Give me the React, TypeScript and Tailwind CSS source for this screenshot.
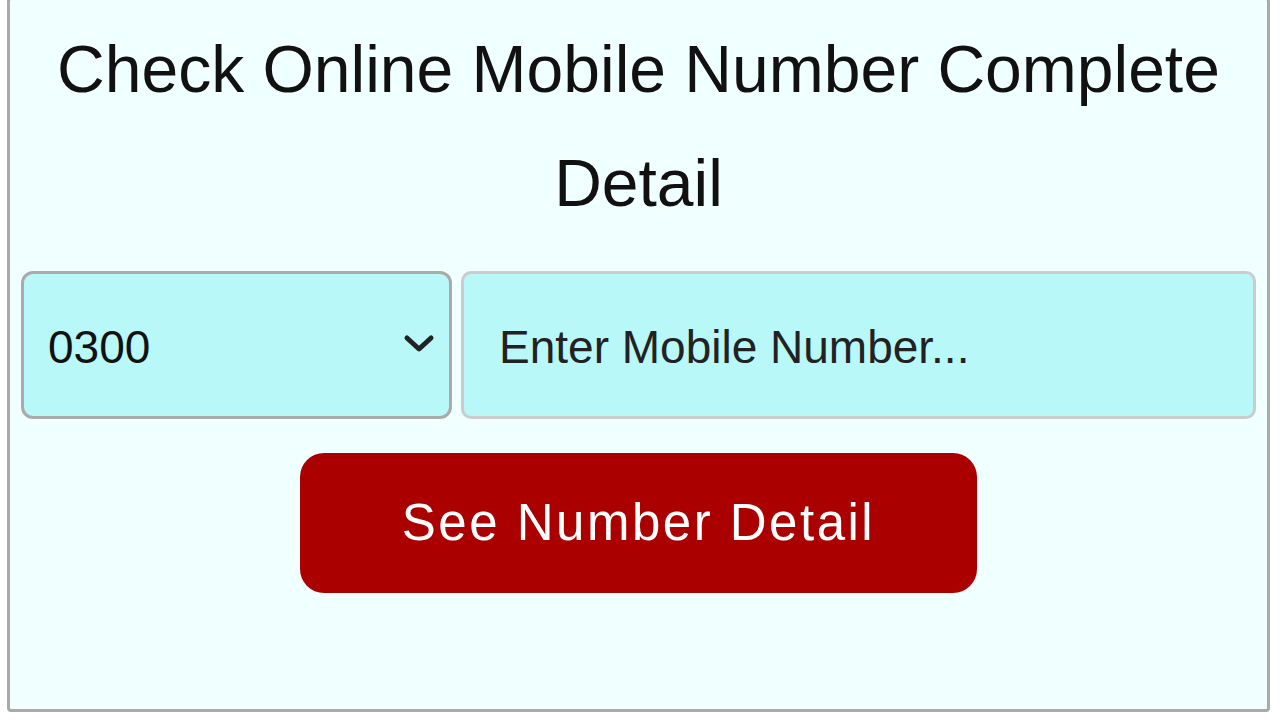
export default function App() {
  return (
    <div className="w-[1280px] h-[720px] overflow-hidden bg-white" style={{ fontFamily: '"Liberation Sans", Arial, sans-serif' }}>
      <div className="ml-[7px] -mt-[3px] w-[1263px] h-[715px] rounded-[4px] border-[3px] border-[#aaaaaa] bg-[#f0ffff] px-[11px]">
        {/* Heading */}
        <h1 className="pt-[12px] text-center text-[66px] leading-[114px] text-[#111111]">
          Check Online Mobile Number Complete Detail
        </h1>

        {/* Inputs */}
        <div className="mt-[31px] flex gap-[9px]">
          <div className="relative w-[431px] h-[148px] rounded-[12px] border-[3px] border-[#aaaaaa] bg-[#b8f8f8] flex items-center">
            <span className="pl-[24px] pt-[4px] text-[46px] text-[#111111]">0300</span>
            <svg className="absolute right-[14px] top-[59px]" width="32" height="22" viewBox="0 0 32 22">
              <polyline points="4,5 16,16 28,5" fill="none" stroke="#222222" strokeWidth="5" strokeLinecap="round" strokeLinejoin="round" />
            </svg>
          </div>
          <div className="flex-1 h-[148px] rounded-[10px] border-[3px] border-[#cccccc] bg-[#b8f8f8] flex items-center">
            <span className="pl-[35px] pt-[4px] text-[46px] text-[#222222]">Enter Mobile Number...</span>
          </div>
        </div>

        {/* Button */}
        <div className="mt-[34px] flex justify-center">
          <button className="w-[677px] h-[140px] rounded-[24px] bg-[#aa0000] text-white text-[51px] tracking-[2.5px]">
            See Number Detail
          </button>
        </div>
      </div>
    </div>
  );
}
